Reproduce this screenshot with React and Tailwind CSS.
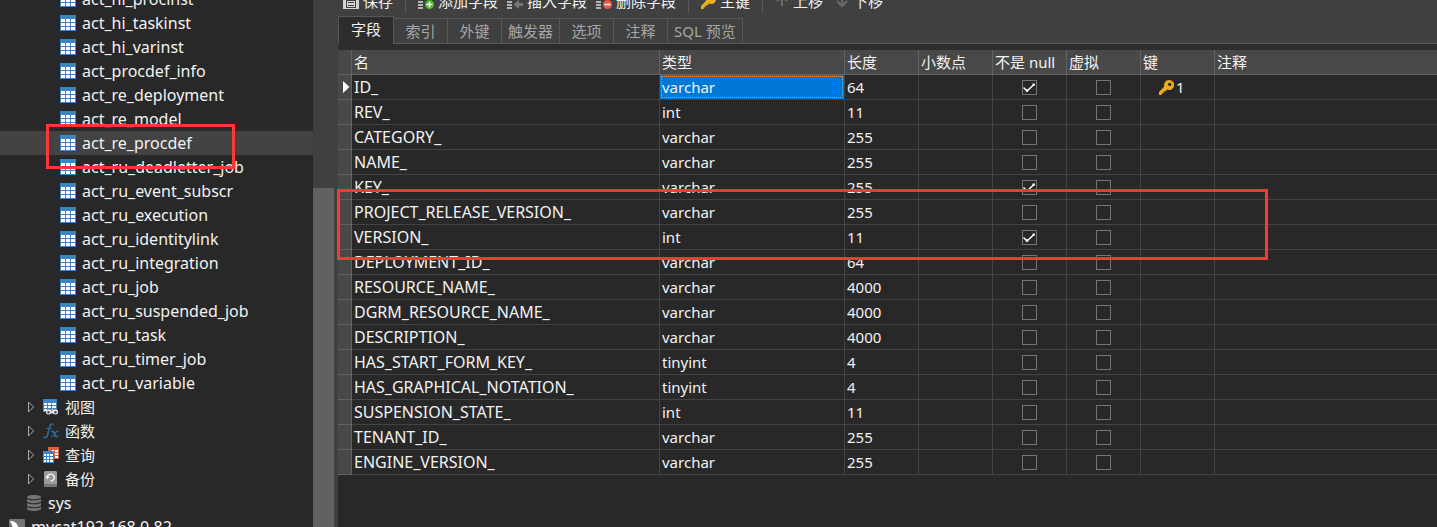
import { useState } from 'react';

const tablas = [
  'act_hi_procinst',
  'act_hi_taskinst',
  'act_hi_varinst',
  'act_procdef_info',
  'act_re_deployment',
  'act_re_model',
  'act_re_procdef',
  'act_ru_deadletter_job',
  'act_ru_event_subscr',
  'act_ru_execution',
  'act_ru_identitylink',
  'act_ru_integration',
  'act_ru_job',
  'act_ru_suspended_job',
  'act_ru_task',
  'act_ru_timer_job',
  'act_ru_variable',
];

const camposIniciales = [
  { nombre: 'ID_', tipo: 'varchar', largo: '64', noNulo: true, virtual: false, clave: 1 },
  { nombre: 'REV_', tipo: 'int', largo: '11', noNulo: false, virtual: false },
  { nombre: 'CATEGORY_', tipo: 'varchar', largo: '255', noNulo: false, virtual: false },
  { nombre: 'NAME_', tipo: 'varchar', largo: '255', noNulo: false, virtual: false },
  { nombre: 'KEY_', tipo: 'varchar', largo: '255', noNulo: true, virtual: false },
  { nombre: 'PROJECT_RELEASE_VERSION_', tipo: 'varchar', largo: '255', noNulo: false, virtual: false },
  { nombre: 'VERSION_', tipo: 'int', largo: '11', noNulo: true, virtual: false },
  { nombre: 'DEPLOYMENT_ID_', tipo: 'varchar', largo: '64', noNulo: false, virtual: false },
  { nombre: 'RESOURCE_NAME_', tipo: 'varchar', largo: '4000', noNulo: false, virtual: false },
  { nombre: 'DGRM_RESOURCE_NAME_', tipo: 'varchar', largo: '4000', noNulo: false, virtual: false },
  { nombre: 'DESCRIPTION_', tipo: 'varchar', largo: '4000', noNulo: false, virtual: false },
  { nombre: 'HAS_START_FORM_KEY_', tipo: 'tinyint', largo: '4', noNulo: false, virtual: false },
  { nombre: 'HAS_GRAPHICAL_NOTATION_', tipo: 'tinyint', largo: '4', noNulo: false, virtual: false },
  { nombre: 'SUSPENSION_STATE_', tipo: 'int', largo: '11', noNulo: false, virtual: false },
  { nombre: 'TENANT_ID_', tipo: 'varchar', largo: '255', noNulo: false, virtual: false },
  { nombre: 'ENGINE_VERSION_', tipo: 'varchar', largo: '255', noNulo: false, virtual: false },
];

const pestanas = ['字段', '索引', '外键', '触发器', '选项', '注释', 'SQL 预览'];
const columnas = ['名', '类型', '长度', '小数点', '不是 null', '虚拟', '键', '注释'];

function IconoTabla() {
  return (
    <svg width="16" height="16" viewBox="0 0 16 16" className="shrink-0" shapeRendering="crispEdges">
      <rect width="16" height="16" fill="#3d85c6" />
      {[4, 8, 12].map(y => [1, 6, 11].map(x => (
        <rect key={`${x}-${y}`} x={x} y={y} width="4" height="3" fill="#fff" />
      )))}
    </svg>
  );
}

function IconoVista() {
  return (
    <svg width="16" height="16" viewBox="0 0 16 16" className="shrink-0">
      <g shapeRendering="crispEdges">
        <rect width="14" height="13" fill="#3d85c6" />
        {[4, 7, 10].map(y => [1, 5, 9].map(x => (
          <rect key={`${x}-${y}`} x={x} y={y} width={x === 9 ? 4 : 3} height="2" fill="#fff" />
        )))}
      </g>
      <path d="M2 16l2.500-6h3l1.500 2 1.500-2h3l2.500 6z" fill="#282828" />
      <path d="M4.500 10.500h3l1.500 1.500 1.500-1.500h3l1.500 2v2h-11v-2z" fill="#ddd" />
      <circle cx="5.500" cy="13" r="2.500" fill="#eee" />
      <circle cx="12.500" cy="13" r="2.500" fill="#eee" />
      <circle cx="5.500" cy="13.200" r="1.200" fill="#444" />
      <circle cx="12.500" cy="13.200" r="1.200" fill="#444" />
    </svg>
  );
}

function IconoFuncion() {
  return (
    <svg width="16" height="16" viewBox="0 0 16 16" className="shrink-0" fill="none" stroke="#2b6ea6" strokeLinecap="round">
      <path d="M10 1.500C8.500.300 7.300 1.200 6.700 3.500L4.600 12C4 14.500 2.500 15.300 1 14.200" strokeWidth="1.500" />
      <path d="M3.800 5.500h4.700" strokeWidth="1.200" />
      <path d="M9 8.500c1.500-.8 2 .3 2.600 2.500s1 3.200 2.900 2.200" strokeWidth="1.700" />
      <path d="M15 8.300c-1.500-.3-2.300 1-3.200 2.500s-1.700 3-3.300 2.700" strokeWidth="1.200" />
    </svg>
  );
}

function IconoConsulta() {
  return (
    <svg width="16" height="16" viewBox="0 0 16 16" className="shrink-0" shapeRendering="crispEdges">
      <rect x="5" width="11" height="12" fill="#dc5f41" />
      {[3, 6, 9].map(y => [9, 12].map(x => (
        <rect key={`${x}-${y}`} x={x} y={y} width={x === 9 ? 2 : 3} height="2" fill="#fff" />
      )))}
      <rect y="4" width="11" height="12" fill="#3d85c6" />
      {[7, 10, 13].map(y => [1, 4, 7].map(x => (
        <rect key={`${x}-${y}`} x={x} y={y} width={x === 7 ? 3 : 2} height="2" fill="#fff" />
      )))}
    </svg>
  );
}

function IconoRespaldo() {
  return (
    <svg width="16" height="16" viewBox="0 0 16 16" className="shrink-0">
      <rect x="1" width="13" height="16" rx="1.500" fill="#9b9b9b" />
      <path d="M1 13h13v1.500a1.500 1.500 0 0 1-1.500 1.500h-10A1.500 1.500 0 0 1 1 14.500z" fill="#777" />
      <path d="M4.200 6.500A3.500 3.500 0 1 1 7.500 10" fill="none" stroke="#fff" strokeWidth="1.200" />
      <path d="M2.500 5.500h4L4.400 8.200z" fill="#fff" />
    </svg>
  );
}

function IconoBase() {
  return (
    <svg width="14" height="16" viewBox="0 0 14 16" className="shrink-0">
      <path d="M0 2.200C0 .900 3 0 7 0s7 .900 7 2.200v11.600C14 15.100 11 16 7 16s-7-.900-7-2.200z" fill="#747474" />
      <path d="M0 3.200c2 2 12 2 14 0M0 7.200c2 2 12 2 14 0M0 11.200c2 2 12 2 14 0" fill="none" stroke="#2c2c2c" strokeWidth="1.100" />
    </svg>
  );
}

function IconoConexion() {
  return (
    <svg width="16" height="16" viewBox="0 0 16 16" className="shrink-0">
      <rect width="16" height="16" rx="1" fill="#757575" />
      <path d="M1 2c3-.5 6 1 7.500 4 .8 1.800 1.500 3.500 4 5l-2 .5.800 2.500c-2-1-3-2.500-4.300-2.500S5.500 13 4.500 13C3 11 4 8 3 6S1.500 3.500 1 2z" fill="#fff" />
    </svg>
  );
}

function IconoLlave() {
  return (
    <svg width="15" height="15" viewBox="0 0 15 15" className="shrink-0">
      <path d="M10 0a5 5 0 0 0-4.700 6.600L0 11.900V15h2.800v-1.700h1.700v-1.700h1.700L8.200 9.600A5 5 0 1 0 10 0zm.700 2.700a1.700 1.700 0 1 1 0 3.400 1.700 1.700 0 0 1 0-3.400z" fill="#edae1c" fillRule="evenodd" />
    </svg>
  );
}

function IconoGuardar() {
  return (
    <svg width="16" height="16" viewBox="0 0 16 16" className="shrink-0" shapeRendering="crispEdges">
      <path d="M0 0h14l2 2v14H0z" fill="#d2d2d2" />
      <rect x="3" y="1" width="9" height="4" fill="#404040" />
      <path d="M3 7h10v8H3z" fill="#404040" />
      <path d="M4 8h8v6H4z" fill="#d2d2d2" />
      <path d="M5 9h6v1H5zM5 12h6v1H5z" fill="#404040" />
    </svg>
  );
}

function IconoCampo({ accion }) {
  return (
    <svg width="16" height="16" viewBox="0 0 16 16" className="shrink-0">
      <path d="M0 1h5v2H0zM0 5h5v2H0zM0 8h5v2H0zM0 11h5v2H0zM0 14h5v2H0z" fill="#b4b4b4" shapeRendering="crispEdges" />
      {accion === 'insertar' ? (
        <path d="M6.500 11.500L12 7v3h4v3h-4v3z" fill="#777" />
      ) : (
        <circle cx="11.500" cy="11.500" r="4.500" fill={accion === 'agregar' ? '#4fb52c' : '#f05545'} />
      )}
      {accion === 'agregar' && <path d="M8.500 11.500h6M11.500 8.500v6" stroke="#fff" strokeWidth="1.500" />}
      {accion === 'eliminar' && <path d="M8.500 11.500h6" stroke="#fff" strokeWidth="1.500" />}
    </svg>
  );
}

function IconoFlecha({ abajo }) {
  return (
    <svg width="14" height="14" viewBox="0 0 14 14" className="shrink-0" fill="none" stroke="#6b6b6b" strokeWidth="2">
      {abajo ? <path d="M7 0v12M2 7l5 5 5-5" /> : <path d="M7 12V2M2 7l5-5 5 5" />}
    </svg>
  );
}

function Casilla({ etiqueta, marcado, onChange }) {
  return (
    <label className="relative block mx-auto size-[15px]">
      <input
        type="checkbox"
        aria-label={etiqueta}
        checked={marcado}
        onChange={onChange}
        className="block appearance-none size-[15px] border border-[#747474]"
      />
      {marcado && (
        <svg width="15" height="15" viewBox="0 0 15 15" className="absolute inset-0 pointer-events-none">
          <path d="M1.500 7.500L5 11L12 4.500" fill="none" stroke="#fff" strokeWidth="1.500" />
          <path d="M3.800 9.300h2.400v2.400H3.800zM10.500 3.500h2.300v2.300h-2.300z" fill="#fff" />
        </svg>
      )}
    </label>
  );
}

function BotonBarra({ icono, children }) {
  return (
    <button className="flex items-center gap-1 whitespace-nowrap">
      {icono}
      {children}
    </button>
  );
}

function Separador() {
  return <span className="w-px h-6 bg-[#575757]" />;
}

const grupos = [
  { nombre: '视图', icono: <IconoVista /> },
  { nombre: '函数', icono: <IconoFuncion /> },
  { nombre: '查询', icono: <IconoConsulta /> },
  { nombre: '备份', icono: <IconoRespaldo /> },
];

export default function App() {
  const [campos, setCampos] = useState(camposIniciales);
  const [tabla, setTabla] = useState('act_re_procdef');
  const [pestana, setPestana] = useState('字段');

  const alternar = (idx, campo) => {
    setCampos(prev => prev.map((c, i) => (i === idx ? { ...c, [campo]: !c[campo] } : c)));
  };

  return (
    <div className="flex h-screen overflow-hidden bg-[#404040] text-[#f2f2f2] text-[15px] leading-5 font-['Noto_Sans','Noto_Sans_CJK_SC',sans-serif]">
      {/* Árbol de objetos */}
      <aside className="relative flex w-[334px] shrink-0 overflow-hidden">
        <nav className="flex-1 -mt-[13px] bg-[#282828]">
          {tablas.map(t => (
            <button
              key={t}
              onClick={() => setTabla(t)}
              className={`flex items-center gap-[6px] w-full h-6 pl-[60px] text-[16px] ${t === tabla ? 'bg-[#434343]' : ''}`}
            >
              <IconoTabla />
              {t}
            </button>
          ))}
          {grupos.map(g => (
            <button key={g.nombre} className="flex items-center w-full h-6 pl-7">
              <svg width="7" height="12" viewBox="0 0 7 12" className="mr-2 shrink-0">
                <path d="M.5 1v10L5.500 6z" fill="none" stroke="#a8a8a8" />
              </svg>
              {g.icono}
              <span className="ml-[6px]">{g.nombre}</span>
            </button>
          ))}
          <button className="flex items-center gap-[7px] w-full h-6 pl-[27px] text-[16px]">
            <IconoBase />
            sys
          </button>
          <button className="flex items-center gap-[6px] w-full h-6 pl-[9px] text-[16px]">
            <IconoConexion />
            mycat192.168.0.82
          </button>
        </nav>
        {/* Barra de desplazamiento */}
        <div className="w-[21px] pt-[188px]">
          <div className="h-full bg-[#616161]" />
        </div>
        <div className="absolute left-[46px] top-[124px] w-[189px] h-[45px] border-3 border-[#ff3636] pointer-events-none" />
      </aside>

      <main className="relative flex flex-col flex-1 min-w-0 ml-1">
        {/* Herramientas */}
        <div className="flex items-center h-[30px] -mt-[14px] pl-[5px] gap-3 shrink-0">
          <BotonBarra icono={<IconoGuardar />}>保存</BotonBarra>
          <Separador />
          <div className="flex gap-[9px]">
            <BotonBarra icono={<IconoCampo accion="agregar" />}>添加字段</BotonBarra>
            <BotonBarra icono={<IconoCampo accion="insertar" />}>插入字段</BotonBarra>
            <BotonBarra icono={<IconoCampo accion="eliminar" />}>删除字段</BotonBarra>
          </div>
          <Separador />
          <BotonBarra icono={<IconoLlave />}>主键</BotonBarra>
          <Separador />
          <div className="flex gap-3">
            <BotonBarra icono={<IconoFlecha />}>上移</BotonBarra>
            <BotonBarra icono={<IconoFlecha abajo />}>下移</BotonBarra>
          </div>
        </div>

        {/* Pestañas */}
        <div role="tablist" className="flex items-end h-7 shrink-0 border-b border-[#575757]">
          {pestanas.map(p => (
            <button
              key={p}
              role="tab"
              aria-selected={p === pestana}
              onClick={() => setPestana(p)}
              className={p === pestana
                ? 'h-7 -mb-px px-3 pb-1 bg-[#2d2d2d] border border-b-0 border-[#575757] whitespace-nowrap'
                : 'h-[25px] min-w-[54px] px-[6px] border-t border-r border-[#575757] text-[#a6a6a6] whitespace-nowrap'}
            >
              {p}
            </button>
          ))}
        </div>

        {/* Campos de la tabla */}
        <div className="flex-1 min-h-0 overflow-hidden pt-[6px] bg-[#2d2d2d]">
          <div className="h-full bg-[#282828]">
            <table className="w-full table-fixed border-separate border-spacing-0">
              <colgroup>
                <col className="w-[14px]" />
                <col className="w-[308px]" />
                <col className="w-[185px]" />
                <col className="w-[74px]" />
                <col className="w-[74px]" />
                <col className="w-[74px]" />
                <col className="w-[74px]" />
                <col className="w-[74px]" />
                <col />
              </colgroup>
              <thead>
                <tr className="h-[25px] bg-[#484848]">
                  <th className="p-0 border-r border-b border-[#626262]" />
                  {columnas.map((c, idx) => (
                    <th key={idx} className="p-0 pl-[2px] text-left font-normal whitespace-nowrap border-r border-b border-[#626262] last:border-r-0">{c}</th>
                  ))}
                </tr>
              </thead>
              <tbody>
                {campos.map((c, idx) => (
                  <tr key={c.nombre} className="h-[25px]">
                    <td className="p-0 bg-[#484848] border-r border-b border-[#626262]">
                      {idx === 0 && (
                        <svg width="7" height="12" viewBox="0 0 7 12" className="ml-[5px]">
                          <path d="M0 0l6.500 6L0 12z" fill="#fff" />
                        </svg>
                      )}
                    </td>
                    <td className="p-0 pl-[2px] text-[16px] border-r border-b border-[#434343]">{c.nombre}</td>
                    <td className="p-0 border-r border-b border-[#434343]">
                      <div className={`h-6 pl-[2px] leading-6 ${idx === 0 ? 'bg-[#0078d7] outline outline-dotted outline-[#ff8728] -outline-offset-2' : ''}`}>{c.tipo}</div>
                    </td>
                    <td className="p-0 pl-[2px] border-r border-b border-[#434343]">{c.largo}</td>
                    <td className="p-0 border-r border-b border-[#434343]" />
                    <td className="p-0 border-r border-b border-[#434343]">
                      <Casilla etiqueta={`${c.nombre} 不是 null`} marcado={c.noNulo} onChange={() => alternar(idx, 'noNulo')} />
                    </td>
                    <td className="p-0 border-r border-b border-[#434343]">
                      <Casilla etiqueta={`${c.nombre} 虚拟`} marcado={c.virtual} onChange={() => alternar(idx, 'virtual')} />
                    </td>
                    <td className="p-0 border-r border-b border-[#434343]">
                      {c.clave && (
                        <div className="flex items-center gap-[2px] pl-[18px]">
                          <IconoLlave />
                          {c.clave}
                        </div>
                      )}
                    </td>
                    <td className="p-0 border-b border-[#434343]" />
                  </tr>
                ))}
              </tbody>
            </table>
          </div>
        </div>
        <div className="absolute -left-px top-[189px] w-[931px] h-[71px] border-3 border-[#ff3636] pointer-events-none" />
      </main>
    </div>
  );
}
